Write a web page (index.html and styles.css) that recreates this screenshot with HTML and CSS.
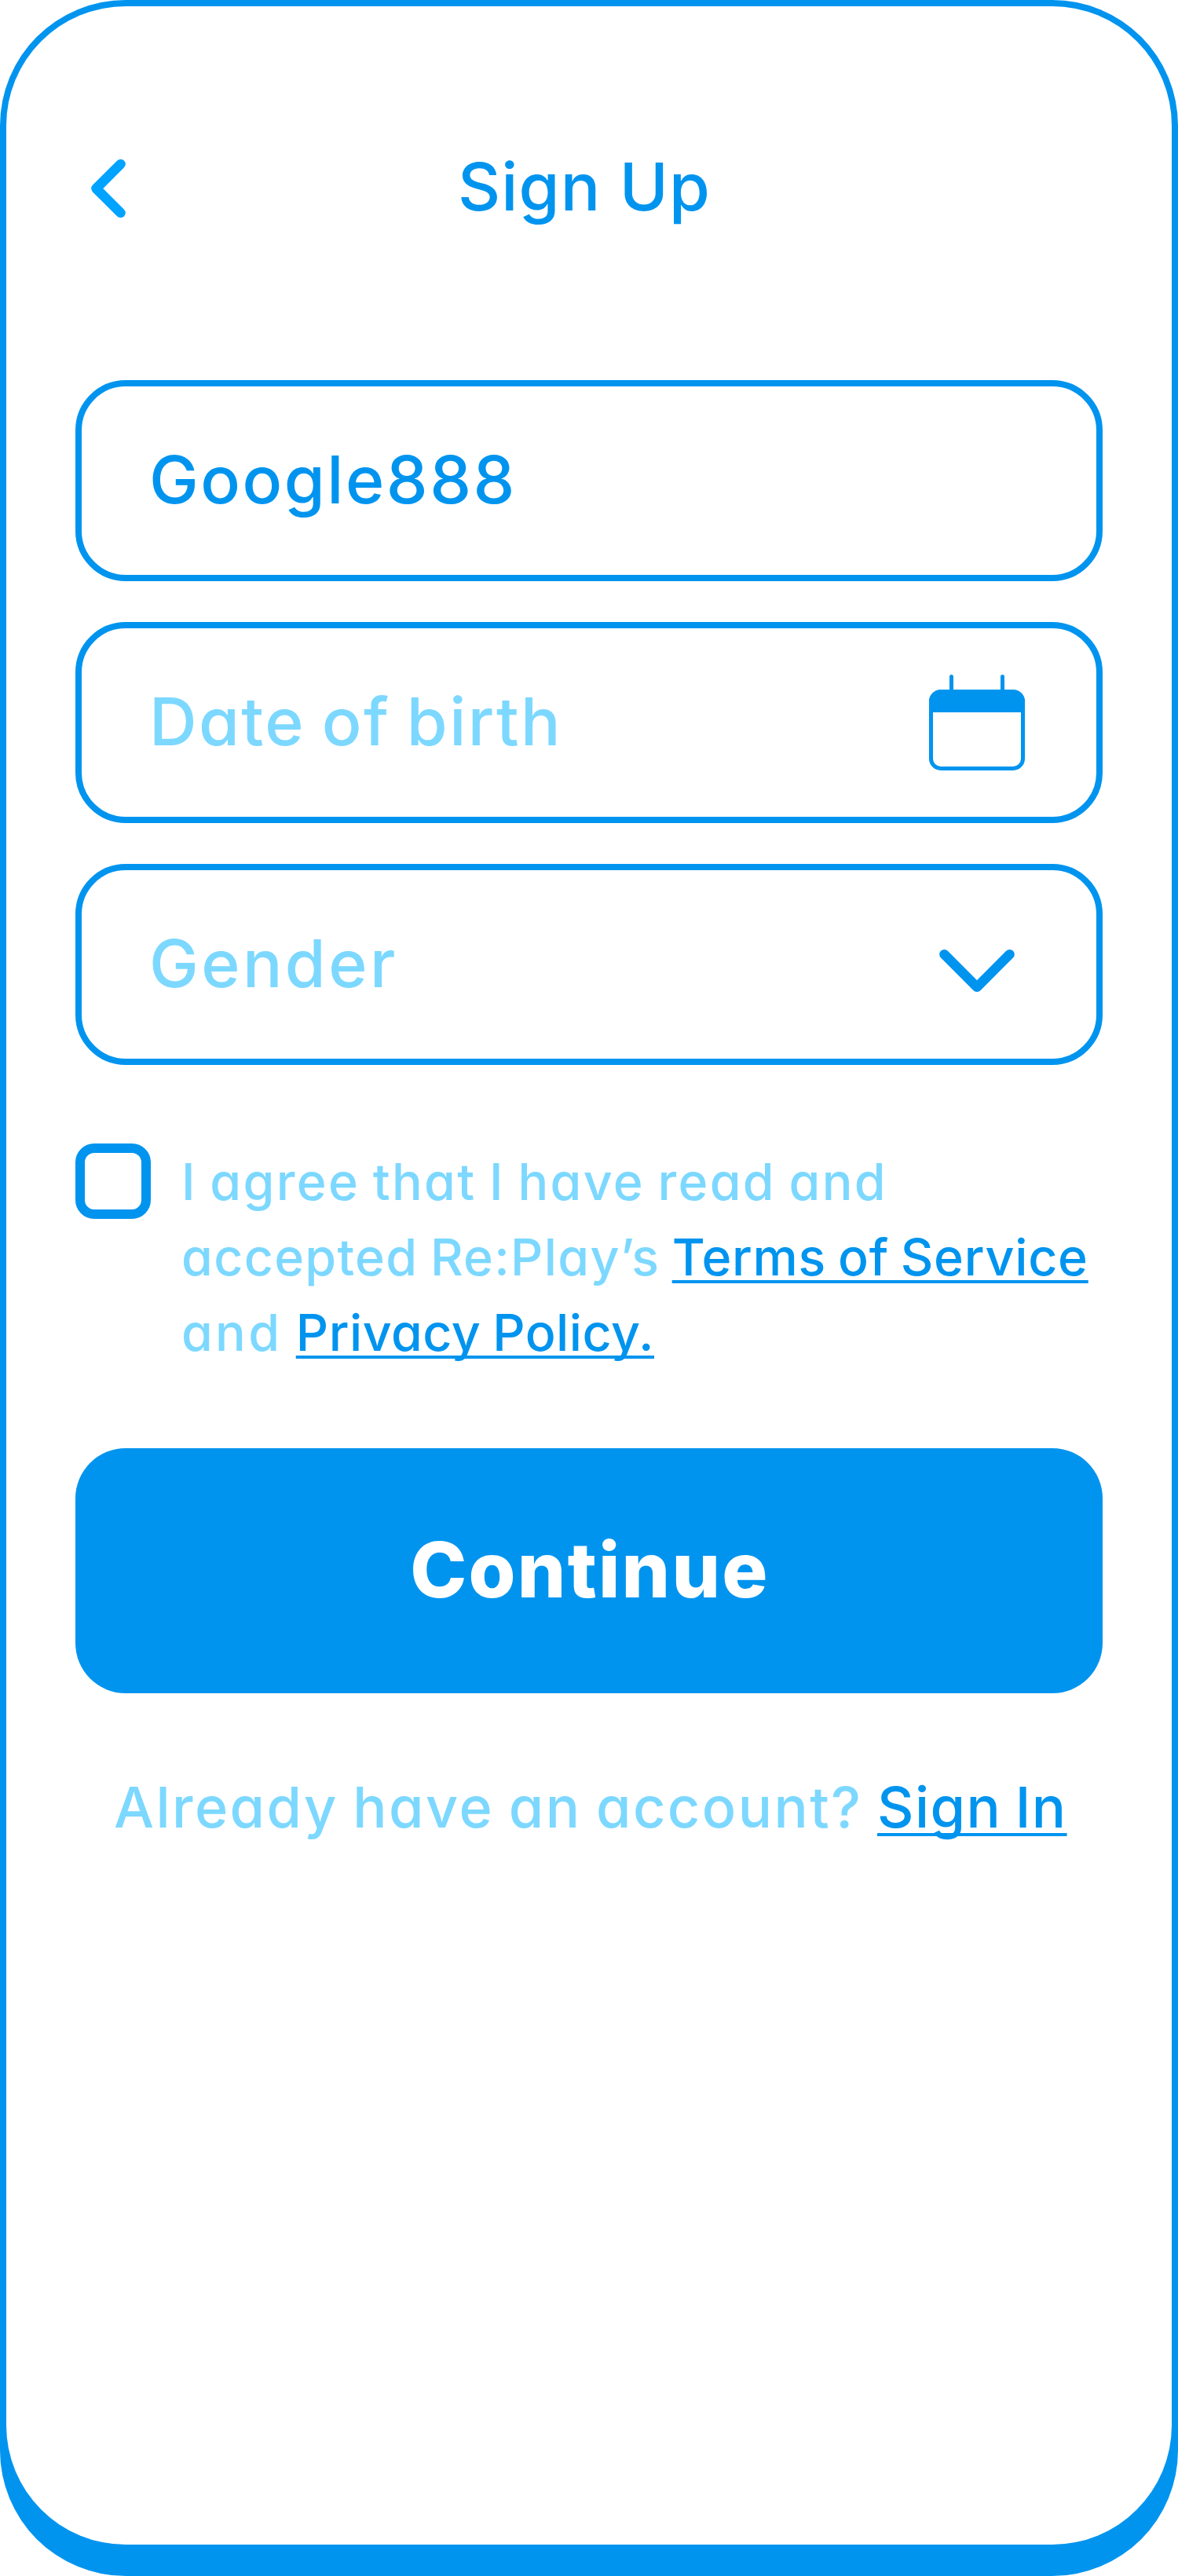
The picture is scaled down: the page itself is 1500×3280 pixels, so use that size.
FILE: index.html
```
<!DOCTYPE html>
<html lang="en">
<head>
<meta charset="utf-8">
<title>Sign Up</title>
<link rel="stylesheet" href="styles.css">
</head>
<body>
<main class="frame">
  <div class="screen">
    <header class="header">
      <button class="back" type="button" aria-label="Back">
        <svg class="back-icon" width="48" height="80" viewBox="112 200 48 80"><path d="M153.6 208.9 122.4 240l31.2 31.1"/></svg>
      </button>
      <h1 class="title">Sign Up</h1>
    </header>
    <form class="form">
      <div class="field"><span class="value">Google888</span></div>
      <div class="field">
        <span class="placeholder placeholder-date">Date of birth</span>
        <svg class="calendar" width="122" height="122" viewBox="0 0 122 122">
          <path class="calendar-line" d="M28.5 21.5V2.5M93.5 21.5V2.5"/>
          <path class="calendar-fill" d="M0 48V34.5A15 15 0 0 1 15 19.2H107a15 15 0 0 1 15 15.3V48z"/>
          <rect class="calendar-line" x="2.5" y="21.7" width="117" height="97.8" rx="12.5"/>
        </svg>
      </div>
      <div class="field">
        <span class="placeholder placeholder-gender">Gender</span>
        <svg class="chevron" width="96" height="56" viewBox="1196 1208 96 56"><path d="M1202.4 1215.2 1244 1256.8l41.6-41.6"/></svg>
      </div>
      <div class="agree">
        <span class="checkbox" role="checkbox" aria-checked="false"></span>
        <p class="terms"><span class="terms-intro">I agree that I have read and</span><br><span class="terms-brand">accepted Re:Play’s </span><a class="link link-tos">Terms of Service</a><br><span class="terms-and">and </span><a class="link link-privacy">Privacy Policy.</a></p>
      </div>
      <button class="submit" type="button">Continue</button>
    </form>
    <p class="footer">Already have an account? <a class="link link-signin">Sign In</a></p>
  </div>
</main>
</body>
</html>
```
FILE: styles.css
```
:root {
  --blue: #0094ef;
  --sky: #7dd8ff;
  --bright: #00a3ff;
}

* { box-sizing: border-box; }

body {
  margin: 0;
  background: #fff;
  color: var(--blue);
  font-family: Inter, "Open Sans", sans-serif;
  font-weight: 500;
  font-feature-settings: "cv11";
}

.frame {
  width: 1500px;
  height: 3280px;
  padding: 8px 8px 40px;
  background: var(--blue);
  border-radius: 160px;
}

.screen {
  height: 100%;
  padding: 172px 88px 0;
  background: #fff;
  border-radius: 152px;
}

.header {
  display: grid;
  grid-template-columns: 1fr auto 1fr;
  align-items: center;
  height: 120px;
  padding-right: 12px;
}

.back {
  justify-self: start;
  display: flex;
  padding: 0 0 0 16px;
  border: 0;
  background: none;
}

.back-icon, .chevron {
  fill: none;
  stroke: var(--blue);
  stroke-width: 12.4;
  stroke-linecap: round;
  stroke-linejoin: round;
}

.back-icon { stroke: var(--bright); }

.title {
  margin: 0;
  padding-bottom: 4px;
  font-size: 84px;
  font-weight: inherit;
  line-height: 116px;
  letter-spacing: 1.1px;
}

.form {
  display: flex;
  flex-direction: column;
  gap: 52px;
  margin-top: 184px;
}

.field {
  display: flex;
  align-items: center;
  justify-content: space-between;
  height: 256px;
  padding: 0 91px 0 86px;
  border: 8px solid var(--blue);
  border-radius: 64px;
  font-size: 84px;
}

.value, .placeholder { padding-bottom: 4px; white-space: nowrap; }
.value { letter-spacing: 2.5px; }
.placeholder { color: var(--sky); }
.placeholder-date { letter-spacing: 2.35px; word-spacing: -4px; }
.placeholder-gender { letter-spacing: 3.4px; }

.calendar-line {
  fill: none;
  stroke: var(--blue);
  stroke-width: 5;
  stroke-linecap: round;
}

.calendar-fill { fill: var(--blue); }

.chevron { margin: 16px 13px 0 0; }

.agree {
  display: flex;
  gap: 39px;
  margin-top: 48px;
}

.checkbox {
  flex: none;
  width: 96px;
  height: 96px;
  border: 12px solid var(--blue);
  border-radius: 24px;
}

.terms {
  margin: 0;
  padding-top: 1px;
  color: var(--sky);
  font-size: 64.5px;
  line-height: 96px;
  word-spacing: -3px;
  white-space: nowrap;
}

.terms-intro { letter-spacing: 2.3px; }
.terms-brand { letter-spacing: 1.28px; }
.terms-and { letter-spacing: 3.25px; }

.link {
  color: var(--blue);
  text-decoration: underline;
  text-decoration-thickness: 4px;
  text-decoration-skip-ink: none;
  text-underline-offset: 6px;
}

.link-tos { letter-spacing: 0.72px; }
.link-privacy { letter-spacing: 0.5px; }

.submit {
  height: 312px;
  margin-top: 47px;
  padding: 0 0 4px 2px;
  border: 0;
  border-radius: 64px;
  background: var(--blue);
  color: #fff;
  font: inherit;
  font-size: 97px;
  font-weight: 800;
  letter-spacing: 2.2px;
}

.footer {
  margin: 97px 0 0;
  padding-left: 49px;
  color: var(--sky);
  font-size: 72px;
  line-height: 96px;
  letter-spacing: 2.41px;
  word-spacing: -3px;
  white-space: nowrap;
}

.link-signin {
  letter-spacing: 1.4px;
  text-underline-offset: 7px;
}
```
